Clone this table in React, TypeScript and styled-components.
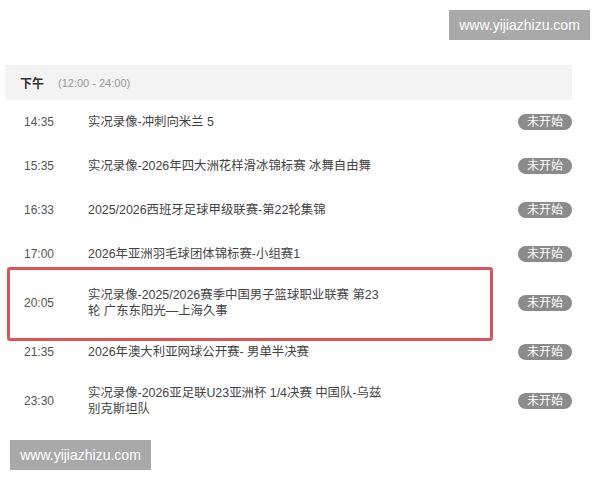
import React from 'react'
import styled, { createGlobalStyle } from 'styled-components'

const GlobalStyle = createGlobalStyle`
  body {
    margin: 0;
    background: #fff;
    font-family: "Liberation Sans", "Noto Sans CJK SC", sans-serif;
  }
`

const Page = styled.div`
  width: 600px;
  height: 480px;
  display: flex;
  flex-direction: column;
  box-sizing: border-box;
  padding: 10px 0;
  overflow: hidden;
`

const Bar = styled.div<{ $side: 'left' | 'right' }>`
  display: flex;
  justify-content: ${(p) => (p.$side === 'right' ? 'flex-end' : 'flex-start')};
  padding: 0 10px;
`

const Watermark = styled.div`
  width: 141px;
  height: 30px;
  background: #a9a9a9;
  color: #fff;
  font-size: 14px;
  display: flex;
  align-items: center;
  justify-content: center;
`

const Schedule = styled.div`
  margin: 25px 28px 0 5px;
`

const SectionHeader = styled.div`
  height: 35px;
  background: #f3f3f3;
  display: flex;
  align-items: center;
  padding-left: 15px;
`

const Period = styled.span`
  font-size: 12px;
  font-weight: bold;
  color: #333;
`

const Range = styled.span`
  margin-left: 14px;
  font-size: 11px;
  color: #999;
`

const Row = styled.div`
  position: relative;
  display: grid;
  grid-template-columns: 64px 296px 1fr auto;
  align-items: center;
  min-height: 44px;
  box-sizing: border-box;
  padding: 11px 0 11px 19px;
`

const Time = styled.span`
  font-size: 12px;
  color: #555;
`

const Title = styled.span`
  font-size: 12.4px;
  line-height: 16px;
  color: #444;
`

const Badge = styled.span`
  grid-column: 4;
  width: 54px;
  height: 16px;
  border-radius: 8px;
  background: #8b8b8b;
  color: #fff;
  font-size: 12px;
  line-height: 16px;
  text-align: center;
`

const Mark = styled.div`
  position: absolute;
  left: 2px;
  top: -9px;
  width: 486px;
  height: 74px;
  box-sizing: border-box;
  border: 3px solid #d9555a;
  border-radius: 3px;
  pointer-events: none;
`

const Footer = styled(Bar)`
  margin-top: auto;
`

const items = [
  { time: '14:35', title: '实况录像-冲刺向米兰 5' },
  { time: '15:35', title: '实况录像-2026年四大洲花样滑冰锦标赛 冰舞自由舞' },
  { time: '16:33', title: '2025/2026西班牙足球甲级联赛-第22轮集锦' },
  { time: '17:00', title: '2026年亚洲羽毛球团体锦标赛-小组赛1' },
  { time: '20:05', title: '实况录像-2025/2026赛季中国男子篮球职业联赛 第23轮 广东东阳光—上海久事', marked: true },
  { time: '21:35', title: '2026年澳大利亚网球公开赛- 男单半决赛' },
  { time: '23:30', title: '实况录像-2026亚足联U23亚洲杯 1/4决赛 中国队-乌兹别克斯坦队' },
]

export default function App() {
  return (
    <Page>
      <GlobalStyle />
      <Bar $side="right">
        <Watermark>www.yijiazhizu.com</Watermark>
      </Bar>
      <Schedule>
        <SectionHeader>
          <Period>下午</Period>
          <Range>(12:00 - 24:00)</Range>
        </SectionHeader>
        {items.map((it) => (
          <Row key={it.time}>
            <Time>{it.time}</Time>
            <Title>{it.title}</Title>
            <Badge>未开始</Badge>
            {it.marked && <Mark />}
          </Row>
        ))}
      </Schedule>
      <Footer $side="left">
        <Watermark>www.yijiazhizu.com</Watermark>
      </Footer>
    </Page>
  )
}
